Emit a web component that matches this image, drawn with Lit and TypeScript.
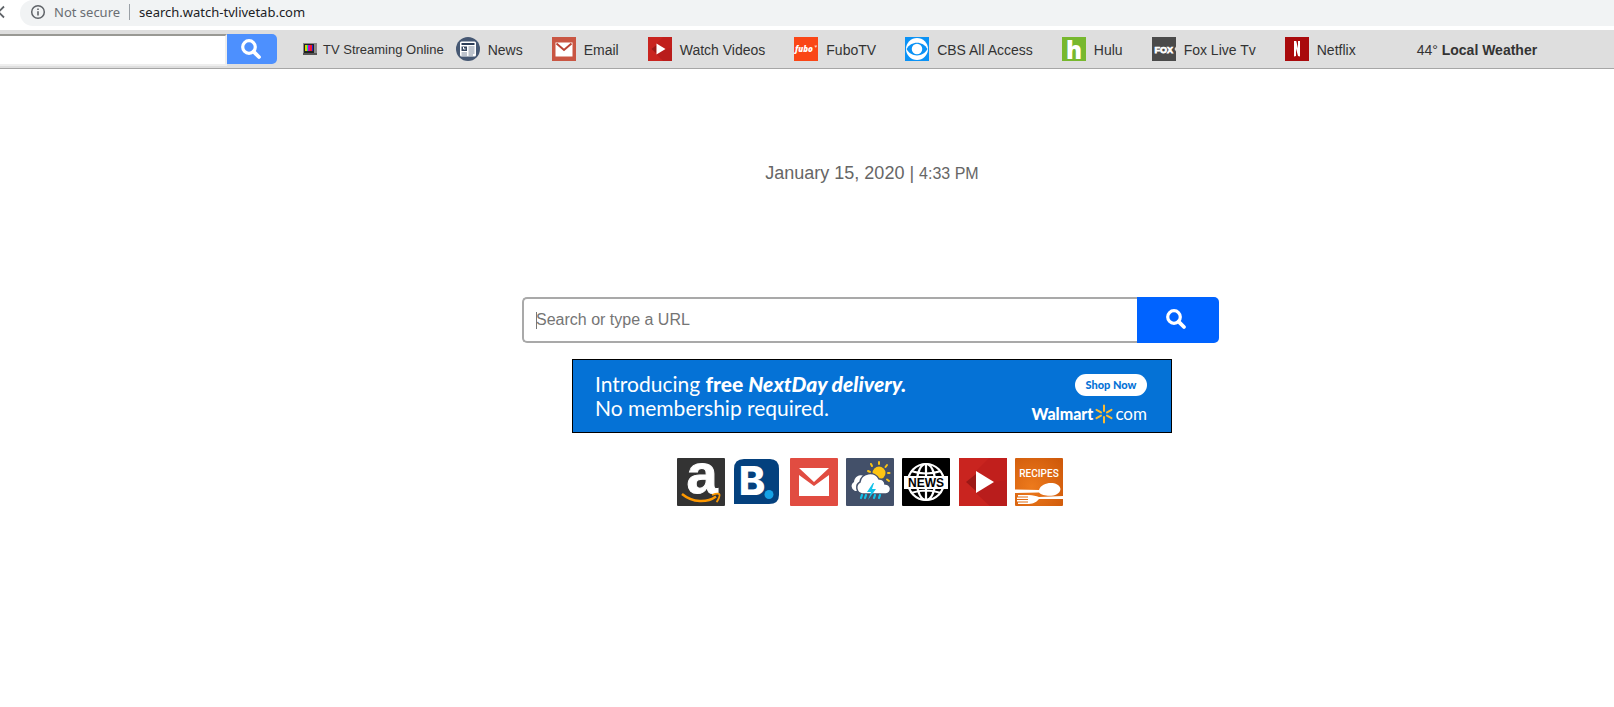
import { LitElement, html, css, svg } from "lit";
import { customElement } from "lit/decorators.js";

const magnifier = html`<svg class="glass" viewBox="0 0 20 20" aria-hidden="true">
  <circle cx="8" cy="8" r="6.3" fill="none" stroke="#fff" stroke-width="3.2" />
  <path d="M12.6 12.6L18 18" stroke="#fff" stroke-width="3.8" stroke-linecap="round" />
</svg>`;

const icons = {
  news: svg`
    <circle cx="24" cy="24" r="24" fill="#465873" />
    <rect x="8" y="9" width="32" height="30" rx="3" fill="#fff" />
    <path d="M11 14H37" stroke="#2c3d57" stroke-width="4" />
    <rect x="11" y="19" width="11" height="9" fill="#34455e" />
    <path d="M15 20V24H19" stroke="#fff" stroke-width="2" fill="none" />
    <path d="M25 20H37M25 24H37M25 28H37M11 32H22M11 36H22M25 32H37M25 36H34" stroke="#7d899b" stroke-width="2" />`,
  email: svg`
    <rect width="48" height="48" fill="#c95643" />
    <rect x="7" y="11" width="34" height="28" fill="#fff" />
    <path d="M9 13L24 26L39 13" fill="none" stroke="#bb4434" stroke-width="4" />`,
  play: svg`
    <rect width="48" height="48" fill="#c9241f" />
    <path d="M17 13L30 0H48V48H31L17 35Z" fill="#c11f1c" />
    <path d="M48 22L35 24L17 35L31 48H48Z" fill="#b91d1c" />
    <path d="M7 24L17 16V33Z" fill="#9c1816" />
    <path d="M17 13L35 24L17 35Z" fill="#fff" />`,
  fubo: svg`
    <rect width="48" height="48" fill="#fa4616" />
    <text x="2" y="30" font-family="Open Sans, sans-serif" font-size="16" font-weight="800" font-style="italic" fill="#fff">fubo</text>
    <path d="M41 18H46M43.500 18V21" stroke="#fff" stroke-width="1.500" />`,
  cbs: svg`
    <rect width="48" height="48" fill="#0b92f5" />
    <circle cx="24" cy="24" r="22" fill="#fff" />
    <path d="M3 24C12 7 36 7 45 24C36 41 12 41 3 24Z" fill="#0b92f5" />
    <circle cx="24" cy="24" r="10.500" fill="#fff" />`,
  hulu: svg`
    <rect width="48" height="48" fill="#77b82e" />
    <text x="24" y="43" text-anchor="middle" font-family="Open Sans, sans-serif" font-size="48" font-weight="800" fill="#fff">h</text>`,
  fox: svg`
    <rect width="48" height="48" fill="#4a4a4a" />
    <text x="23.500" y="31" text-anchor="middle" font-family="Liberation Sans, sans-serif" font-size="18" font-weight="700" fill="#fff" stroke="#fff" stroke-width="1.500">FOX</text>
    <path d="M48 19L45 24L48 29Z" fill="#ddd" />`,
  netflix: svg`
    <rect width="48" height="48" fill="#a90a0c" />
    <path d="M18 8H22.500L26 23V8H30V39L26 38L22 23V38L18 39Z" fill="#fff" />`,
  amazon: svg`
    <rect width="48" height="48" rx="1" fill="#333" />
    <text x="25" y="35" text-anchor="middle" font-family="Liberation Sans, sans-serif" font-size="56" font-weight="700" fill="#fff" stroke="#fff" stroke-width="1">a</text>
    <path d="M5 36C16 45 30 45 39 38.500" fill="none" stroke="#f90" stroke-width="2.500" />
    <path d="M35 37C39 35.500 42 35.500 42.500 36.500S41.500 42 39.500 44" fill="none" stroke="#f90" stroke-width="1.800" />`,
  booking: svg`
    <path d="M1 11Q1 1 11 1H37Q46 1 46 11V37Q46 46 36 46H1Z" fill="#04417e" />
    <text x="19" y="37" text-anchor="middle" font-family="Inter, sans-serif" font-size="40" font-weight="800" fill="#fff">B</text>
    <circle cx="36" cy="36.500" r="4.500" fill="#15a2e6" />`,
  gmail: svg`
    <rect width="48" height="48" rx="1" fill="#e14c41" />
    <path d="M9 10H39V38H9Z" fill="#fff" />
    <path d="M9 10L24 24L39 10V17L24 28L9 17Z" fill="#e14c41" />
    <path d="M10 10H38L24 21.500Z" fill="#fff" />`,
  weather: svg`
    <rect width="48" height="48" rx="1" fill="#435069" />
    <path d="M33 4V6M41 7L39.500 9M43.500 15H42M43 23L41 21.500M25 6L26 8M22 13L24 14" stroke="#fdc513" stroke-width="2" stroke-linecap="round" />
    <circle cx="33" cy="15" r="6.500" fill="#fdc513" />
    <path d="M9 33A5 5 0 0 1 8 24A7 7 0 0 1 18 18L22 33Z" fill="#fff" />
    <path d="M16 36A6.500 6.500 0 0 1 14 24A10 9.500 0 0 1 33 21A5.500 5.500 0 0 1 39 26A5 5 0 0 1 40 36Z" fill="#fff" stroke="#435069" stroke-width="1.500" />
    <path d="M27 25L21 34H25L22 42L30 31H26L28 25Z" fill="#12c2e9" />
    <path d="M16 37L15 40M20 37L19 40M29 37L28 40M34 37L33 40" stroke="#12c2e9" stroke-width="2.200" stroke-linecap="round" />`,
  globe: svg`
    <rect width="48" height="48" rx="1" fill="#000" />
    <g fill="none" stroke="#fff" stroke-width="2.200">
      <circle cx="24" cy="24" r="18" />
      <ellipse cx="24" cy="24" rx="9" ry="18" />
      <path d="M24 6V42M9 13Q24 18 39 13M9 35Q24 30 39 35" />
    </g>
    <rect x="2" y="18" width="44" height="13" fill="#fff" />
    <text x="24" y="29" text-anchor="middle" font-family="Liberation Sans, sans-serif" font-size="12" font-weight="700" fill="#000">NEWS</text>`,
  recipes: svg`
    <defs><radialGradient id="warm" cx=".35" cy=".6" r=".8">
      <stop offset="0" stop-color="#ed7a1c" /><stop offset="1" stop-color="#cf5a0b" />
    </radialGradient></defs>
    <rect width="48" height="48" rx="1" fill="url(#warm)" />
    <text x="24" y="19" text-anchor="middle" font-family="Roboto, sans-serif" font-size="10" font-weight="500" fill="#fff">RECIPES</text>
    <path d="M0 31.500L24 32C27 23 44 23 45.500 31C44.500 40 28 39 24 34.500L0 35Z" fill="#fff" />
    <path d="M48 41L24 41C21 45 17 46 12 46H3V44.500H13V43.500H2V42H13V41H2V39.500H13V38.500H3V37H14C18 37 21 38 24 39L48 38Z" fill="#fff" />`,
};

const links: [keyof typeof icons, string][] = [
  ["news", "News"],
  ["email", "Email"],
  ["play", "Watch Videos"],
  ["fubo", "FuboTV"],
  ["cbs", "CBS All Access"],
  ["hulu", "Hulu"],
  ["fox", "Fox Live Tv"],
  ["netflix", "Netflix"],
];

const tiles: [keyof typeof icons, string][] = [
  ["amazon", "Amazon"],
  ["booking", "Booking"],
  ["gmail", "Mail"],
  ["weather", "Weather"],
  ["globe", "News"],
  ["play", "Videos"],
  ["recipes", "Recipes"],
];

@customElement("app-root")
export class AppRoot extends LitElement {
  static styles = css`
    :host {
      display: block;
      min-height: 100vh;
      background: #fff;
      color: #333;
      font-family: "Liberation Sans", Arial, sans-serif;
    }
    * { box-sizing: border-box; }
    a { color: inherit; text-decoration: none; }
    svg { display: block; flex: none; overflow: visible; }
    input, button { margin: 0; border: 0; padding: 0; font: inherit; outline: 0; }
    button { cursor: pointer; display: flex; align-items: center; justify-content: center; }

    .chrome {
      display: flex;
      height: 30px;
      padding-bottom: 4px;
      font: 13px/24px "Noto Sans", "Open Sans", sans-serif;
    }
    .stop { width: 20px; height: 24px; overflow: hidden; }
    .address {
      flex: 1;
      display: flex;
      align-items: center;
      padding: 0 0 2px 10px;
      background: #f1f3f4;
      border-radius: 13px 0 0 13px;
    }
    .info { width: 16px; height: 16px; margin-right: 8px; }
    .secure { color: #6a6e73; }
    .rule { width: 1px; height: 16px; margin: 0 9px; background: #9aa0a6; }
    .url { color: #202124; }

    .toolbar {
      display: flex;
      align-items: center;
      height: 39px;
      background: #dedede;
      border-bottom: 1px solid #a6a6a6;
      font-size: 14px;
      line-height: 16px;
      white-space: nowrap;
    }
    .quick { display: flex; width: 277px; height: 30px; }
    .quick input {
      flex: 1;
      min-width: 0;
      height: 32px;
      padding: 0 8px;
      background: #fff;
      border: 2px solid #eee;
      border-top-color: #999994;
      border-left: 0;
    }
    .quick button { width: 50px; padding-right: 2px; background: #4d90fe; border-radius: 0 5px 5px 0; }
    .glass { width: 20px; height: 20px; }
    .tv { display: flex; align-items: center; gap: 6px; margin: 0 12px 0 26px; font-size: 13px; }
    .tv svg { width: 14px; height: 12px; }
    .links { display: flex; gap: 29px; }
    .link { display: flex; align-items: center; gap: 8px; }
    .link svg { width: 24px; height: 24px; }
    .label { padding-top: 2px; }
    .weather { margin-left: 61px; }

    main { display: flex; flex-direction: column; align-items: center; padding-left: 130px; }
    .date { margin: 94px 0 0; font-size: 18px; line-height: 20px; color: #666; }
    .time { font-size: 16px; }
    .search {
      position: relative;
      display: flex;
      width: 697px;
      max-width: 100%;
      height: 46px;
      margin: 113px 3px 16px 0;
    }
    .search input {
      flex: 1;
      min-width: 0;
      padding: 0 12px;
      font-size: 16px;
      background: #fff;
      border: 2px solid #a9a9a9;
      border-right: 0;
      border-radius: 5px 0 0 5px;
    }
    .search input::placeholder { color: #757575; opacity: 1; }
    .search button { width: 82px; padding: 0 4px 2px 0; background: #0063ff; border-radius: 0 5px 5px 0; }
    .caret { position: absolute; left: 14px; top: 15px; width: 1px; height: 17px; background: #777; }

    .ad {
      display: flex;
      justify-content: space-between;
      width: 600px;
      max-width: 100%;
      height: 74px;
      padding: 12px 24px 0 22px;
      background: #0572d6;
      border: 1px solid #000;
      color: #fff;
      font: 21px/24px Lato, sans-serif;
    }
    .ad b { font-weight: 900; }
    .side { display: flex; flex-direction: column; align-items: flex-end; gap: 8px; padding-top: 2px; }
    .shop {
      width: 72px;
      height: 22px;
      border-radius: 11px;
      background: #fff;
      color: #0572d6;
      font: 900 11px/21px Lato, sans-serif;
      text-align: center;
    }
    .brand { display: flex; align-items: center; gap: 2px; font-size: 17px; line-height: 20px; }
    .brand b { font-size: 16px; }
    .brand svg { width: 18px; height: 20px; }

    .tiles { display: flex; justify-content: space-between; width: 386px; margin: 25px 4px 0 0; }
    .tiles svg { width: 48px; height: 48px; }
  `;

  render() {
    return html`
      <div class="chrome">
        <svg class="stop" viewBox="0 0 20 24" aria-hidden="true">
          <path d="M4 6.500L-1.500 12L4 17.500" fill="none" stroke="#5f6368" stroke-width="1.800" />
        </svg>
        <div class="address">
          <svg class="info" viewBox="0 0 16 16" aria-hidden="true">
            <circle cx="8" cy="8" r="6.300" fill="none" stroke="#5f6368" stroke-width="1.500" />
            <path d="M8 7.200V11.500M8 4.400V6" stroke="#5f6368" stroke-width="1.600" />
          </svg>
          <span class="secure">Not secure</span>
          <span class="rule"></span>
          <span class="url">search.watch-tvlivetab.com</span>
        </div>
      </div>

      <nav class="toolbar">
        <form class="quick" @submit=${this.stay}>
          <input type="text" aria-label="Toolbar search" />
          <button aria-label="Search">${magnifier}</button>
        </form>
        <a class="tv" href="#">
          <svg viewBox="0 0 14 12" aria-hidden="true">
            <rect width="14" height="12" fill="#8a8a8a" />
            <rect y="10" width="14" height="2" fill="#555" />
            <rect x="1" y="1" width="10" height="9" fill="#222" />
            <path d="M2 2H4V8H2Z" fill="#d8d800" />
            <path d="M4 2H5V8H4Z" fill="#00c8c8" />
            <path d="M5 2H7V8H5Z" fill="#e000b0" />
            <path d="M7 2H9V8H7Z" fill="#f01830" />
            <path d="M9 2H10V8H9Z" fill="#2020d0" />
          </svg>
          <span class="label">TV Streaming Online</span>
        </a>
        <div class="links">
          ${links.map(
            ([icon, label]) => html`<a class="link" href="#">
              <svg viewBox="0 0 48 48" aria-hidden="true">${icons[icon]}</svg>
              <span class="label">${label}</span>
            </a>`
          )}
        </div>
        <a class="weather label" href="#">44° <b>Local Weather</b></a>
      </nav>

      <main>
        <p class="date">January 15, 2020 | <span class="time">4:33 PM</span></p>
        <form class="search" @submit=${this.stay}>
          <input type="text" placeholder="Search or type a URL" aria-label="Search or type a URL" />
          <span class="caret"></span>
          <button aria-label="Search">${magnifier}</button>
        </form>
        <a class="ad" href="#">
          <span>Introducing <b>free <i>NextDay delivery.</i></b><br />No membership required.</span>
          <span class="side">
            <span class="shop">Shop Now</span>
            <span class="brand">
              <b>Walmart</b>
              <svg viewBox="0 0 18 20" aria-hidden="true">
                <path d="M9 1.500V7M9 13V18.500M1.500 5.800L6 8.400M16.500 5.800L12 8.400M1.500 14.200L6 11.600M16.500 14.200L12 11.600" stroke="#fdbb30" stroke-width="2" stroke-linecap="round" />
              </svg>
              <span>com</span>
            </span>
          </span>
        </a>
        <div class="tiles">
          ${tiles.map(
            ([icon, label]) => html`<a href="#" aria-label=${label}>
              <svg viewBox="0 0 48 48" aria-hidden="true">${icons[icon]}</svg>
            </a>`
          )}
        </div>
      </main>
    `;
  }

  private stay(event: Event) {
    event.preventDefault();
  }
}
